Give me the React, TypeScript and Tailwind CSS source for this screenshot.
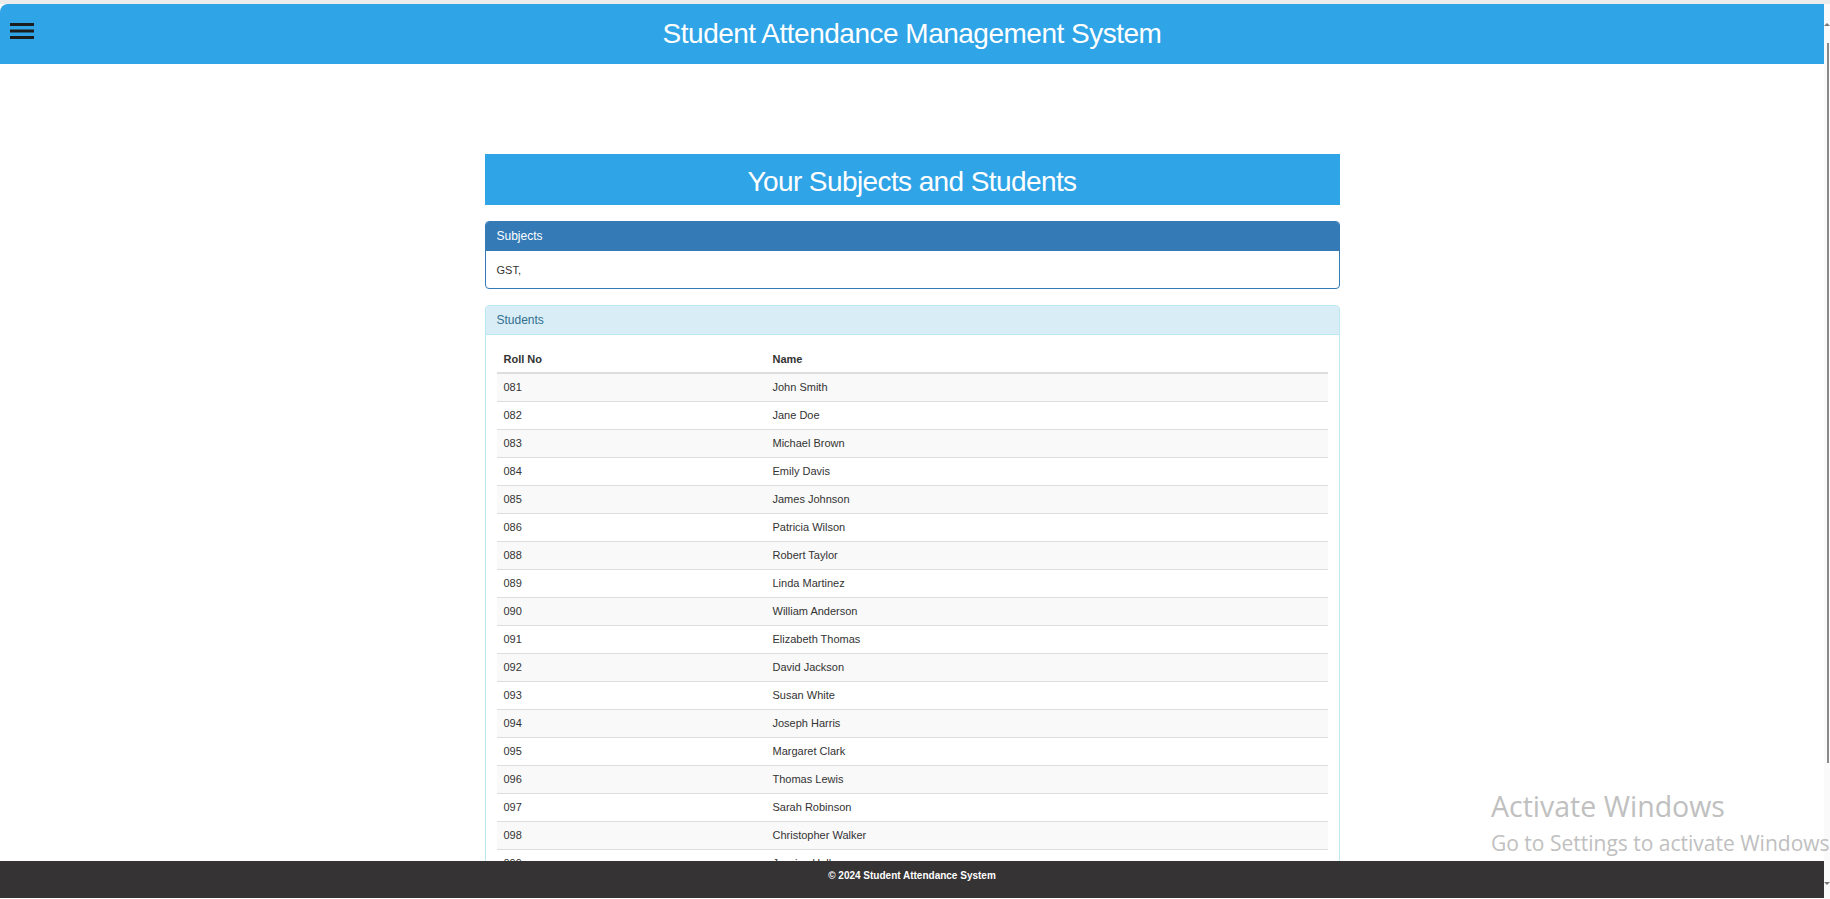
import React from "react";

type Student = { roll: string; name: string };

const students: Student[] = [
  { roll: "081", name: "John Smith" },
  { roll: "082", name: "Jane Doe" },
  { roll: "083", name: "Michael Brown" },
  { roll: "084", name: "Emily Davis" },
  { roll: "085", name: "James Johnson" },
  { roll: "086", name: "Patricia Wilson" },
  { roll: "088", name: "Robert Taylor" },
  { roll: "089", name: "Linda Martinez" },
  { roll: "090", name: "William Anderson" },
  { roll: "091", name: "Elizabeth Thomas" },
  { roll: "092", name: "David Jackson" },
  { roll: "093", name: "Susan White" },
  { roll: "094", name: "Joseph Harris" },
  { roll: "095", name: "Margaret Clark" },
  { roll: "096", name: "Thomas Lewis" },
  { roll: "097", name: "Sarah Robinson" },
  { roll: "098", name: "Christopher Walker" },
  { roll: "099", name: "Jessica Hall" },
];

function MenuIcon() {
  return (
    <svg width="24" height="16" viewBox="0 0 24 16" fill="#1c1c1c">
      <rect x="0" y="0" width="24" height="3" />
      <rect x="0" y="6.5" width="24" height="3" />
      <rect x="0" y="13" width="24" height="3" />
    </svg>
  );
}

export default function App() {
  return (
    <div className="relative flex h-screen w-full flex-col overflow-hidden bg-white font-['Liberation_Sans',Arial,sans-serif] text-[#333]">
      <div className="h-[4px] shrink-0 bg-[#ececec]" />
      <div className="flex min-h-0 flex-1">
        <div className="flex min-w-0 flex-1 flex-col">
          {/* top bar */}
          <header className="grid h-[60px] shrink-0 grid-cols-[1fr_auto_1fr] items-center rounded-tl-[8px] bg-[#2fa4e7]">
            <button className="mt-[19px] ml-[10px] self-start justify-self-start">
              <MenuIcon />
            </button>
            <h1 className="text-[28px] tracking-[-0.5px] text-white">
              Student Attendance Management System
            </h1>
            <div />
          </header>

          <main className="min-h-0 flex-1 overflow-hidden">
            <div className="mx-auto mt-[90px] w-[855px]">
              <div className="flex h-[51px] items-center justify-center bg-[#2fa4e7] pt-[4px] text-[28px] tracking-[-0.6px] text-white">
                Your Subjects and Students
              </div>

              <section className="mt-[16px] overflow-hidden rounded-[4px] border border-[#337ab7]">
                <div className="flex h-[29px] items-center border-b border-[#337ab7] bg-[#337ab7] px-[11px] text-[12px] text-white">
                  Subjects
                </div>
                <div className="p-[11px] pt-[12px] pb-[10px] text-[11px] leading-[15px]">GST,</div>
              </section>

              <section className="mt-[16px] overflow-hidden rounded-[4px] border border-[#bce8f1]">
                <div className="flex h-[29px] items-center border-b border-[#bce8f1] bg-[#d9edf7] px-[11px] text-[12px] text-[#31708f]">
                  Students
                </div>
                <div className="p-[11px] text-[11px]">
                  <div className="grid h-[28px] grid-cols-[269px_1fr] items-center border-b-2 border-[#ddd] font-bold">
                    <div className="px-[7px]">Roll No</div>
                    <div className="px-[7px]">Name</div>
                  </div>
                  {students.map((s, i) => (
                    <div
                      key={s.roll}
                      className={`grid h-[28px] grid-cols-[269px_1fr] items-center border-b border-[#ddd] ${
                        i % 2 === 0 ? "bg-[#f9f9f9]" : "bg-white"
                      }`}
                    >
                      <div className="px-[7px]">{s.roll}</div>
                      <div className="px-[7px]">{s.name}</div>
                    </div>
                  ))}
                </div>
              </section>
            </div>
          </main>

          <footer className="h-[37px] shrink-0 bg-[#353334] pt-[7px] text-center text-[10px] font-bold leading-[15px] text-white">
            © 2024 Student Attendance System
          </footer>
          <div className="h-[1px] shrink-0 bg-white" />
        </div>

        {/* thin browser scrollbar */}
        <div className="flex w-[6px] shrink-0 flex-col items-end bg-[#fafafa]">
          <div className="mt-[19px] h-0 w-0 border-x-[3px] border-b-[3px] border-x-transparent border-b-[#777]" />
          <div className="mt-[17px] mr-[1px] h-[720px] w-[2px] bg-[#8a8a8a]" />
          <div className="mt-auto mb-[14px] h-0 w-0 border-x-[3px] border-t-[3px] border-x-transparent border-t-[#777]" />
        </div>
      </div>

      {/* windows activation watermark */}
      <div className="pointer-events-none absolute left-[1491px] top-[792px] flex flex-col font-['Open_Sans','Noto_Sans',sans-serif] text-[#c0c0c0]">
        <span className="text-[28.5px] leading-[28.5px]">Activate Windows</span>
        <span className="mt-[12px] text-[21px] leading-[21px] whitespace-nowrap">
          Go to Settings to activate Windows
        </span>
      </div>
    </div>
  );
}
